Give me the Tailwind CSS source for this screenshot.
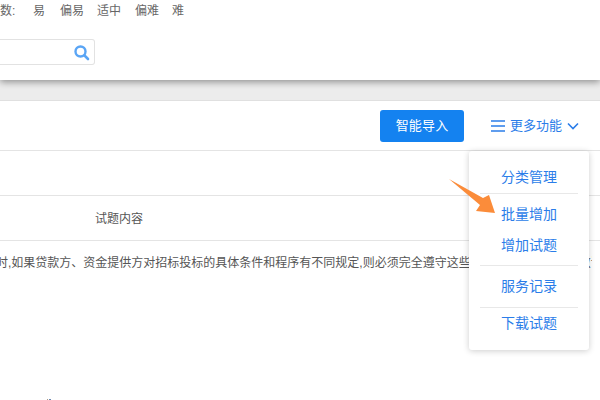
<!DOCTYPE html>
<html lang="zh-CN">
<head>
<meta charset="UTF-8" />
<title>试题管理</title>
<script src="https://cdn.jsdelivr.net/npm/@tailwindcss/browser@4"></script>
</head>
<body class="w-[600px] h-[400px] overflow-hidden bg-white font-['Liberation_Sans','Noto_Sans_CJK_SC',sans-serif] text-[#555]">
  <!-- filter panel -->
  <section class="h-[80px] relative z-10 shadow-[0_2px_7px_rgba(0,0,0,0.4)] bg-white overflow-hidden">
    <div class="flex items-center h-[22px] text-[12px] text-[#666]">
      <span class="w-[34px] -ml-[12px] shrink-0">系数:</span>
      <span class="ml-[11px]">易</span>
      <span class="ml-[15px]">偏易</span>
      <span class="ml-[13px]">适中</span>
      <span class="ml-[14px]">偏难</span>
      <span class="ml-[13px]">难</span>
    </div>
    <div class="mt-[17px] w-[95px] h-[26px] border border-[#e2e2e2] border-l-0 rounded-r-[3px] flex items-center justify-end pr-[4px] pt-[1px]">
      <svg class="w-[17px] h-[17px]" viewBox="0 0 17 17" fill="none" stroke="#5aa5f5" stroke-linecap="round">
        <circle cx="7.5" cy="7.5" r="5" stroke-width="2.4" />
        <path d="M11.5 11.5l3.5 3.5" stroke-width="2.6" />
      </svg>
    </div>
  </section>

  <div class="h-[21px] bg-[#ececec] border-b border-[#e0e0e0]"></div>

  <main class="relative">
    <!-- toolbar -->
    <div class="h-[50px] border-b border-[#e4e4e4] flex items-center justify-end">
      <button class="w-[84px] h-[32px] rounded-[3px] bg-[#1482f0] text-white text-[13px] tracking-[0.15px]">智能导入</button>
      <div class="w-[136px] flex items-center pl-[27px] text-[#2b7de9] text-[13px]">
        <svg class="w-[14px] h-[14px] mr-[5px]" viewBox="0 0 14 14" stroke="#2b7de9" stroke-width="1.4" fill="none">
          <path d="M0 2h14M0 7h14M0 12h14" />
        </svg>
        <span>更多功能</span>
        <svg class="w-[12px] h-[8px] ml-[5px]" viewBox="0 0 12 8" stroke="#2b7de9" stroke-width="1.6" fill="none">
          <path d="M1 1.5l5 5 5-5" />
        </svg>
      </div>
    </div>

    <!-- table -->
    <div class="h-[45px] border-b border-[#e4e4e4]"></div>
    <div class="h-[45px] border-b border-[#e4e4e4] flex items-center pl-[95px] pt-[1px] text-[12px] text-[#555]">试题内容</div>
    <div class="h-[44px] w-[592px] flex items-center overflow-hidden text-[12px] text-[#555] whitespace-nowrap">
      <span class="-ml-[4px]">时,如果贷款方、资金提供方对招标投标的具体条件和程序有不同规定,则必须完全遵守这些规定和程序，否则无效请查看</span>
    </div>
    <div class="mt-[114px] pl-[47px] flex gap-[1px]">
      <span class="w-[1px] h-[1px] bg-[#b09a80]"></span>
      <span class="w-[2px] h-[1px] bg-[#6a86b0]"></span>
    </div>

    <!-- dropdown -->
    <div class="absolute left-[469px] top-[50px] w-[120px] h-[199px] bg-white rounded-[3px] shadow-[0_1px_6px_rgba(0,0,0,0.2)] px-[11px] text-[14px] text-[#2b7de9] text-center">
      <div class="h-[43px] leading-[52px] border-b border-[#e8e8e8]">分类管理</div>
      <div class="h-[40px] leading-[41px]">批量增加</div>
      <div class="h-[32px] leading-[22px] border-b border-[#e8e8e8]">增加试题</div>
      <div class="h-[42px] leading-[40px] border-b border-[#e8e8e8]">服务记录</div>
      <div class="h-[42px] leading-[30px]">下载试题</div>
    </div>

    <!-- annotation arrow -->
    <svg class="absolute left-[446px] top-[78px] w-[52px] h-[40px]" viewBox="0 0 52 40">
      <path d="M3 0L37 19L43 16L49 34L30 32L34 26Z" fill="#fb8c3a" />
    </svg>
  </main>
</body>
</html>
